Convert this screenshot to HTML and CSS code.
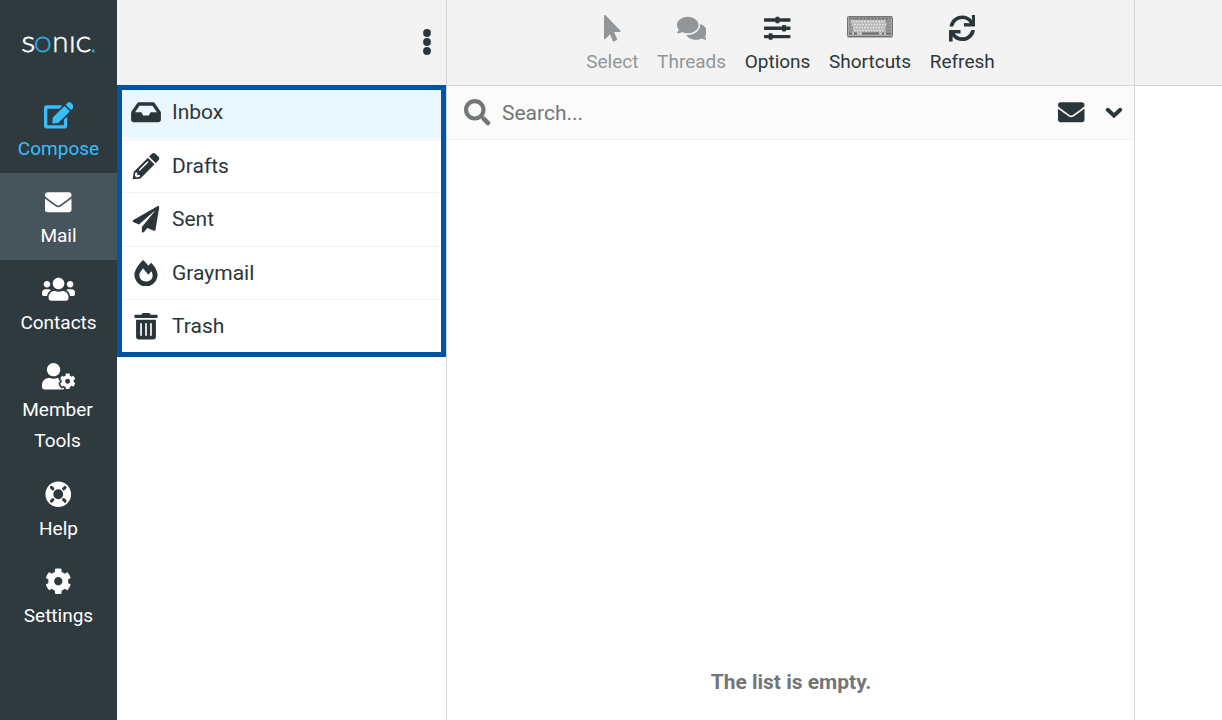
FILE: index.html
```html
<!DOCTYPE html>
<html lang="en">
<head>
<meta charset="utf-8">
<title>Sonic Webmail</title>
<link rel="stylesheet" href="styles.css">
</head>
<body>
<div class="app">
  <nav class="sidebar">
    <div class="brand">
      <svg class="logo" width="117" height="86" viewBox="0 0 117 86">
        <text class="logo-text" y="51.6"><tspan x="21.5" textLength="13.5" lengthAdjust="spacingAndGlyphs">S</tspan><tspan class="accent" x="34.2">O</tspan><tspan class="logo-n" x="52.2">n</tspan><tspan x="69.5">I</tspan><tspan x="75.9">C</tspan><tspan class="accent dot" x="90.8">.</tspan></text>
      </svg>
    </div>
    <a class="nav-item compose">
      <svg class="icon" viewBox="0 0 576 512"><path d="M402.6 83.2l90.2 90.2c3.8 3.8 3.8 10 0 13.8L274.4 405.6l-92.8 10.3c-12.4 1.4-22.9-9.1-21.5-21.5l10.3-92.8L388.8 83.2c3.8-3.8 10-3.8 13.8 0zm162-22.9l-48.8-48.8c-15.2-15.2-39.9-15.2-55.2 0l-35.4 35.4c-3.8 3.8-3.8 10 0 13.8l90.2 90.2c3.8 3.8 10 3.8 13.8 0l35.4-35.4c15.2-15.3 15.2-40 0-55.2zM384 346.2V448H64V128h229.8c3.2 0 6.2-1.3 8.5-3.5l40-40c7.6-7.6 2.2-20.5-8.5-20.5H48C21.5 64 0 85.5 0 112v352c0 26.5 21.5 48 48 48h352c26.5 0 48-21.5 48-48V306.2c0-10.7-12.9-16-20.5-8.5l-40 40c-2.2 2.3-3.5 5.3-3.5 8.5z"/></svg>
      <span>Compose</span>
    </a>
    <a class="nav-item active">
      <svg class="icon" viewBox="0 0 512 512"><path d="M502.3 190.8c3.9-3.1 9.7-.2 9.7 4.7V400c0 26.5-21.5 48-48 48H48c-26.5 0-48-21.5-48-48V195.6c0-5 5.7-7.8 9.7-4.7 22.4 17.4 52.1 39.5 154.1 113.6 21.1 15.4 56.7 47.8 92.2 47.6 35.7.3 72-32.8 92.3-47.6 102-74.1 131.6-96.3 154-113.7zM256 320c23.2.4 56.6-29.2 73.4-41.4 132.7-96.3 142.8-104.7 173.4-128.7 5.8-4.5 9.2-11.5 9.2-18.9v-19c0-26.5-21.5-48-48-48H48c-26.5 0-48 21.5-48 48v19c0 7.4 3.4 14.3 9.2 18.9 30.6 23.9 40.7 32.4 173.4 128.7 16.8 12.2 50.2 41.8 73.4 41.4z"/></svg>
      <span>Mail</span>
    </a>
    <a class="nav-item">
      <svg class="icon" viewBox="0 0 640 512"><path d="M96 224c35.3 0 64-28.7 64-64s-28.7-64-64-64-64 28.7-64 64 28.7 64 64 64zm448 0c35.3 0 64-28.7 64-64s-28.7-64-64-64-64 28.7-64 64 28.7 64 64 64zm32 32h-64c-17.6 0-33.5 7.1-45.1 18.6 40.3 22.1 68.9 62 75.1 109.4h66c17.7 0 32-14.3 32-32v-32c0-35.3-28.7-64-64-64zm-256 0c61.9 0 112-50.1 112-112S381.9 32 320 32 208 82.1 208 144s50.1 112 112 112zm76.8 32h-8.3c-20.8 10-43.9 16-68.5 16s-47.6-6-68.5-16h-8.3C179.6 288 128 339.6 128 403.2V432c0 26.5 21.5 48 48 48h288c26.5 0 48-21.5 48-48v-28.8c0-63.6-51.6-115.2-115.2-115.2zm-223.7-13.4C161.5 263.1 145.6 256 128 256H64c-35.3 0-64 28.7-64 64v32c0 17.7 14.3 32 32 32h65.9c6.3-47.4 34.9-87.3 75.2-109.4z"/></svg>
      <span>Contacts</span>
    </a>
    <a class="nav-item">
      <svg class="icon" viewBox="0 0 640 512"><path d="M610.5 373.3c2.6-14.1 2.6-28.5 0-42.6l25.8-14.9c3-1.7 4.3-5.2 3.3-8.5-6.7-21.6-18.2-41.2-33.2-57.4-2.3-2.5-6-3.1-9-1.4l-25.8 14.9c-10.9-9.3-23.4-16.5-36.9-21.3v-29.8c0-3.4-2.4-6.4-5.7-7.1-22.3-5-45-4.8-66.2 0-3.3.7-5.7 3.7-5.7 7.1v29.8c-13.5 4.8-26 12-36.9 21.3l-25.8-14.9c-2.9-1.7-6.7-1.1-9 1.4-15 16.2-26.5 35.8-33.2 57.4-1 3.3.4 6.8 3.3 8.5l25.8 14.9c-2.6 14.1-2.6 28.5 0 42.6l-25.8 14.9c-3 1.7-4.3 5.2-3.3 8.5 6.7 21.6 18.2 41.1 33.2 57.4 2.3 2.5 6 3.1 9 1.4l25.8-14.9c10.9 9.3 23.4 16.5 36.9 21.3v29.8c0 3.4 2.4 6.4 5.7 7.1 22.3 5 45 4.8 66.2 0 3.3-.7 5.7-3.7 5.7-7.1v-29.8c13.5-4.8 26-12 36.9-21.3l25.8 14.9c2.9 1.7 6.7 1.1 9-1.4 15-16.2 26.5-35.8 33.2-57.4 1-3.3-.4-6.8-3.3-8.5l-25.8-14.9zM496 400.5c-26.8 0-48.5-21.8-48.5-48.5s21.8-48.5 48.5-48.5 48.5 21.8 48.5 48.5-21.7 48.5-48.5 48.5zM224 256c70.7 0 128-57.3 128-128S294.7 0 224 0 96 57.3 96 128s57.3 128 128 128zm201.2 226.5c-2.3-1.2-4.6-2.6-6.8-3.9l-7.9 4.6c-6 3.4-12.8 5.3-19.6 5.3-10.9 0-21.4-4.6-28.9-12.6-18.3-19.8-32.3-43.9-40.2-69.6-5.5-17.7 1.9-36.4 17.9-45.7l7.9-4.6c-.1-2.6-.1-5.2 0-7.8l-7.9-4.6c-16-9.2-23.4-28-17.9-45.7.9-2.9 2.2-5.8 3.2-8.7-3.8-.3-7.5-1.2-11.4-1.2h-16.7c-22.2 10.2-46.9 16-72.9 16s-50.6-5.8-72.9-16h-16.7C60.2 288 0 348.2 0 422.4V464c0 26.5 21.5 48 48 48h352c10.1 0 19.5-3.2 27.2-8.5-1.2-3.8-2-7.7-2-11.8v-9.2z"/></svg>
      <span class="two-line">Member Tools</span>
    </a>
    <a class="nav-item lower">
      <svg class="icon" viewBox="0 0 512 512"><circle class="ring" cx="256" cy="256" r="172"/><path class="notch" d="M152 152l-28-28M360 152l28-28M152 360l-28 28M360 360l28 28"/></svg>
      <span>Help</span>
    </a>
    <a class="nav-item lower">
      <svg class="icon" viewBox="0 0 512 512"><path d="M487.4 315.7l-42.6-24.6c4.3-23.2 4.3-47 0-70.2l42.6-24.6c4.9-2.8 7.1-8.6 5.5-14-11.1-35.6-30-67.8-54.7-94.6-3.8-4.1-10-5.1-14.8-2.3L380.8 110c-17.9-15.4-38.5-27.3-60.8-35.1V25.8c0-5.6-3.9-10.5-9.4-11.7-36.7-8.2-74.3-7.8-109.2 0-5.5 1.2-9.4 6.1-9.4 11.7V75c-22.2 7.9-42.8 19.8-60.8 35.1L88.7 85.5c-4.9-2.8-11-1.9-14.8 2.3-24.7 26.7-43.6 58.9-54.7 94.6-1.7 5.4.6 11.2 5.5 14L67.3 221c-4.3 23.2-4.3 47 0 70.2l-42.6 24.6c-4.9 2.8-7.1 8.6-5.5 14 11.1 35.6 30 67.8 54.7 94.6 3.8 4.1 10 5.1 14.8 2.3l42.6-24.6c17.9 15.4 38.5 27.3 60.8 35.1v49.2c0 5.6 3.9 10.5 9.4 11.7 36.7 8.2 74.3 7.8 109.2 0 5.5-1.2 9.4-6.1 9.4-11.7v-49.2c22.2-7.9 42.8-19.8 60.8-35.1l42.6 24.6c4.9 2.8 11 1.9 14.8-2.3 24.7-26.7 43.6-58.9 54.7-94.6 1.5-5.5-.7-11.3-5.6-14.1zM256 336c-44.1 0-80-35.9-80-80s35.9-80 80-80 80 35.9 80 80-35.9 80-80 80z"/></svg>
      <span>Settings</span>
    </a>
  </nav>

  <section class="folders">
    <header class="bar folders-bar">
      <svg class="dots" width="8" height="26" viewBox="0 0 8 26"><circle cx="4" cy="4" r="3.9"/><circle cx="4" cy="13" r="3.9"/><circle cx="4" cy="22" r="3.9"/></svg>
    </header>
    <ul class="folder-list">
      <li class="folder selected"><svg class="icon" viewBox="0 0 576 512"><path d="M567.938 243.908L462.25 85.374A48.003 48.003 0 0 0 422.311 64H153.689a48 48 0 0 0-39.938 21.374L8.062 243.908A47.994 47.994 0 0 0 0 270.533V400c0 26.51 21.49 48 48 48h480c26.51 0 48-21.49 48-48V270.533a47.994 47.994 0 0 0-8.062-26.625zM162.252 128h251.497l85.333 128H376l-32 64H232l-32-64H76.918l85.334-128z"/></svg><span>Inbox</span></li>
      <li class="folder"><svg class="icon" viewBox="0 0 512 512"><path d="M497.9 142.1l-46.1 46.1c-4.7 4.7-12.3 4.7-17 0l-111-111c-4.7-4.7-4.7-12.3 0-17l46.1-46.1c18.7-18.7 49.1-18.7 67.9 0l60.1 60.1c18.8 18.7 18.8 49.1 0 67.9zM284.2 99.8L21.6 362.4.4 483.9c-2.9 16.4 11.4 30.6 27.8 27.8l121.5-21.3 262.6-262.6c4.7-4.7 4.7-12.3 0-17l-111-111c-4.8-4.7-12.4-4.7-17.1 0zM124.1 339.9c-5.5-5.5-5.5-14.3 0-19.8l154-154c5.5-5.5 14.3-5.5 19.8 0s5.5 14.3 0 19.8l-154 154c-5.5 5.5-14.3 5.5-19.8 0zM88 424h48v36.3l-64.5 11.3-31.1-31.1L51.7 376H88v48z"/></svg><span>Drafts</span></li>
      <li class="folder"><svg class="icon" viewBox="0 0 512 512"><path d="M476 3.2L12.5 270.6c-18.1 10.4-15.8 35.6 2.2 43.2L121 358.4l287.3-253.2c5.5-4.9 13.3 2.6 8.6 8.3L176 407v80.5c0 23.6 28.5 32.9 42.5 15.8L282 426l124.6 52.2c14.2 6 30.4-2.9 33-18.2l72-432C515 7.8 493.3-6.8 476 3.2z"/></svg><span>Sent</span></li>
      <li class="folder"><svg class="icon" viewBox="0 0 448 512"><path d="M323.56 51.2c-20.8 19.3-39.58 39.59-56.22 59.97C240.08 73.62 206.28 35.53 168 0 69.74 91.17 0 209.96 0 281.6 0 408.85 100.29 512 224 512s224-103.15 224-230.4c0-53.27-51.98-163.14-124.44-230.4zm-19.47 340.65C282.43 407.01 255.72 416 226.86 416 154.71 416 96 368.26 96 290.75c0-38.61 24.31-72.63 72.79-130.75 6.93 7.98 98.83 125.34 98.83 125.34l58.63-66.88c4.14 6.85 7.91 13.55 11.27 19.97 27.35 52.19 15.81 118.97-33.43 153.42z"/></svg><span>Graymail</span></li>
      <li class="folder"><svg class="icon" viewBox="0 0 448 512"><path d="M32 464a48 48 0 0 0 48 48h288a48 48 0 0 0 48-48V128H32zm272-256a16 16 0 0 1 32 0v224a16 16 0 0 1-32 0zm-96 0a16 16 0 0 1 32 0v224a16 16 0 0 1-32 0zm-96 0a16 16 0 0 1 32 0v224a16 16 0 0 1-32 0zM432 32H312l-9.4-18.7A24 24 0 0 0 281.1 0H166.8a23.72 23.72 0 0 0-21.4 13.3L136 32H16A16 16 0 0 0 0 48v32a16 16 0 0 0 16 16h416a16 16 0 0 0 16-16V48a16 16 0 0 0-16-16z"/></svg><span>Trash</span></li>
    </ul>
  </section>

  <main class="messages">
    <header class="bar toolbar">
      <a class="tool disabled"><svg class="icon" viewBox="0 0 320 512"><path d="M302.189 329.126H196.105l55.831 135.993c3.889 9.428-.555 19.999-9.444 23.999l-49.165 21.427c-9.165 4-19.443-.571-23.332-9.714l-53.053-129.136-86.664 89.138C18.729 472.71 0 463.554 0 447.977V18.299C0 1.899 19.921-6.096 30.277 5.443l284.412 292.542c11.472 11.179 3.007 31.141-12.5 31.141z"/></svg><span>Select</span></a>
      <a class="tool disabled"><svg class="icon" viewBox="0 0 576 512"><path d="M416 192c0-88.4-93.1-160-208-160S0 103.6 0 192c0 34.3 14.1 65.9 38 92-13.4 30.2-35.5 54.2-35.8 54.5-2.2 2.3-2.8 5.7-1.5 8.7S4.8 352 8 352c36.6 0 66.9-12.3 88.7-25 32.2 15.7 70.3 25 111.3 25 114.9 0 208-71.6 208-160zm122 220c23.9-26 38-57.7 38-92 0-66.9-53.5-124.2-129.3-148.1.9 6.6 1.3 13.3 1.3 20.1 0 105.9-107.7 192-240 192-10.8 0-21.3-.8-31.7-1.9C207.8 439.6 281.8 480 368 480c41 0 79.1-9.2 111.3-25 21.8 12.7 52.1 25 88.7 25 3.2 0 6.1-1.9 7.3-4.8 1.3-2.9.7-6.3-1.5-8.7-.3-.3-22.4-24.2-35.8-54.5z"/></svg><span>Threads</span></a>
      <a class="tool"><svg class="icon" viewBox="0 0 512 512"><g><rect y="64" width="512" height="64" rx="14"/><rect x="222" y="32" width="76" height="128" rx="16"/><rect y="224" width="512" height="64" rx="14"/><rect x="350" y="192" width="76" height="128" rx="16"/><rect y="384" width="512" height="64" rx="14"/><rect x="90" y="352" width="76" height="128" rx="16"/></g></svg><span>Options</span></a>
      <a class="tool"><svg class="keyboard" width="46" height="26.5" viewBox="0 0 46 26.5"><g transform="translate(0 -1)"><rect x=".5" y="2.5" width="45" height="20" rx="1" fill="#a9a9a9" stroke="#707172"/><path d="M2 4.5h42" stroke="#737474" stroke-width="2" stroke-dasharray="3 .6"/><path d="M3 7.5h35M4 10.5h35M3 13.5h35M4 16.5h34" stroke="#e4e4e4" stroke-width="2" stroke-dasharray="2 .8"/><path d="M2 7.5h2M2 10.5h3M2 13.5h4M2 16.5h4M39 7.5h5M40 10.5h4M39 13.5h5M39 16.5h5" stroke="#888" stroke-width="1.8"/><path d="M2 19.5h42" stroke="#c9c9c9" stroke-width="2"/><path d="M2 19.5h3M7 19.5h3M15 19.5h17M35 19.5h2M39 19.5h5" stroke="#666" stroke-width="2"/><path d="M.5 23h45" stroke="#777" stroke-width="1"/></g></svg><span>Shortcuts</span></a>
      <a class="tool"><svg class="icon" viewBox="0 0 512 512"><path d="M440.65 12.57l4 82.77A247.16 247.16 0 0 0 255.83 8C134.73 8 33.91 94.92 12.29 209.82A12 12 0 0 0 24.09 224h49.05a12 12 0 0 0 11.67-9.26 175.91 175.91 0 0 1 317-56.94l-101.46-4.86a12 12 0 0 0-12.57 12v47.41a12 12 0 0 0 12 12H500a12 12 0 0 0 12-12V12a12 12 0 0 0-12-12h-47.37a12 12 0 0 0-11.98 12.57zM255.83 432a175.61 175.61 0 0 1-146-77.8l101.8 4.87a12 12 0 0 0 12.57-12v-47.4a12 12 0 0 0-12-12H12a12 12 0 0 0-12 12V500a12 12 0 0 0 12 12h47.35a12 12 0 0 0 12-12.6l-4.15-82.57A247.17 247.17 0 0 0 255.83 504c121.11 0 221.93-86.92 243.55-201.82a12 12 0 0 0-11.8-14.18h-49.05a12 12 0 0 0-11.67 9.26A175.86 175.86 0 0 1 255.83 432z"/></svg><span>Refresh</span></a>
    </header>
    <div class="search">
      <svg class="icon search-icon" viewBox="0 0 512 512"><path d="M505 442.7L405.3 343c-4.5-4.5-10.6-7-17-7H372c27.6-35.3 44-79.7 44-128C416 93.1 322.9 0 208 0S0 93.1 0 208s93.1 208 208 208c48.3 0 92.7-16.4 128-44v16.3c0 6.4 2.5 12.5 7 17l99.7 99.7c9.4 9.4 24.6 9.4 33.9 0l28.3-28.3c9.4-9.4 9.4-24.6.1-34zM208 336c-70.7 0-128-57.2-128-128 0-70.7 57.2-128 128-128 70.7 0 128 57.2 128 128 0 70.7-57.2 128-128 128z"/></svg>
      <span class="placeholder">Search...</span>
      <svg class="icon" viewBox="0 0 512 512"><path d="M502.3 190.8c3.9-3.1 9.7-.2 9.7 4.7V400c0 26.5-21.5 48-48 48H48c-26.5 0-48-21.5-48-48V195.6c0-5 5.7-7.8 9.7-4.7 22.4 17.4 52.1 39.5 154.1 113.6 21.1 15.4 56.7 47.8 92.2 47.6 35.7.3 72-32.8 92.3-47.6 102-74.1 131.6-96.3 154-113.7zM256 320c23.2.4 56.6-29.2 73.4-41.4 132.7-96.3 142.8-104.7 173.4-128.7 5.8-4.5 9.2-11.5 9.2-18.9v-19c0-26.5-21.5-48-48-48H48c-26.5 0-48 21.5-48 48v19c0 7.4 3.4 14.3 9.2 18.9 30.6 23.9 40.7 32.4 173.4 128.7 16.8 12.2 50.2 41.8 73.4 41.4z"/></svg>
      <svg class="chevron" width="18" height="12" viewBox="0 0 18 12"><path d="M2.8 2.8L9 8.6l6.2-5.8"/></svg>
    </div>
    <p class="empty">The list is empty.</p>
  </main>

  <section class="preview"><header class="bar"></header></section>
</div>
</body>
</html>
```
FILE: styles.css
```css
* { box-sizing: border-box; }

body {
  margin: 0;
  font-family: Roboto, sans-serif;
  color: #2c363a;
  background: #fff;
}

.app {
  display: grid;
  grid-template-columns: 117px 329px 689px 1fr;
  height: 720px;
  overflow: hidden;
}

.icon {
  display: block;
  height: 26.5px;
  flex: none;
  fill: currentColor;
}

.sidebar { background: #2f3a3f; color: #fff; }
.brand { height: 86px; }
.logo { display: block; }
.logo-text { font: 300 21.7px Lato, sans-serif; fill: #fff; stroke: #fff; stroke-width: .8px; }
.logo-n { font-size: 29.5px; stroke-width: .4px; }
.accent { fill: #2ba5dc; stroke: #2ba5dc; }
.dot { stroke-width: 1px; }

.nav-item {
  display: flex;
  flex-direction: column;
  align-items: center;
  gap: 4px;
  padding: 16px 10px 9.5px;
  font-size: 19px;
  line-height: 31px;
  text-align: center;
}
.lower { gap: 5px; padding-bottom: 8.5px; }
.two-line { padding-right: 2px; }
.compose { color: #37beff; }
.active { background: #46555b; }
.ring { fill: none; stroke: #fff; stroke-width: 152px; }
.notch { stroke: #2f3a3f; stroke-width: 58px; stroke-linecap: round; }

.bar {
  height: 86px;
  background: #f3f3f3;
  border-bottom: 1px solid #d0d8da;
}

.folders-bar { display: flex; justify-content: flex-end; padding: 29px 15px 0 0; }
.dots { fill: #2c363a; }

.folder-list { position: relative; margin: 0; padding: 0; list-style: none; }
.folder-list::after {
  content: "";
  position: absolute;
  inset: -1px 0 -4.5px;
  border: 5px solid #0054a0;
}
.folder {
  display: flex;
  align-items: center;
  height: 53.5px;
  padding-left: 14px;
  border-bottom: 1px solid #f1f3f4;
  font-size: 21px;
}
.folder:last-child { height: 52.5px; border-bottom: 0; }
.folder .icon { width: 30px; margin-right: 11px; }
.selected { background: linear-gradient(#eaf7fe 52px, #fff 52px); }

.messages {
  display: flex;
  flex-direction: column;
  border-left: 1px solid #d0d8da;
  border-right: 1px solid #d0d8da;
}

.toolbar {
  display: flex;
  justify-content: center;
  gap: 18.6px;
  padding-top: 15px;
}
.tool {
  display: flex;
  flex-direction: column;
  align-items: center;
  gap: 4.5px;
  font-size: 19px;
  line-height: 31px;
}
.disabled { color: #929698; }

.search {
  display: flex;
  align-items: center;
  height: 54px;
  padding: 0 11.5px 0 17px;
  background: #fbfbfb;
  border-bottom: 1px solid #eff1f2;
  font-size: 21px;
}
.search-icon, .placeholder { color: #737677; }
.placeholder { flex: 1; margin-left: 11.5px; }
.chevron {
  margin-left: 20px;
  fill: none;
  stroke: #2c363a;
  stroke-width: 4px;
  stroke-linecap: round;
}

.empty {
  margin: auto 0 22px;
  padding-left: 1px;
  font-size: 21px;
  font-weight: 700;
  line-height: 32px;
  text-align: center;
  color: #737677;
}
```
